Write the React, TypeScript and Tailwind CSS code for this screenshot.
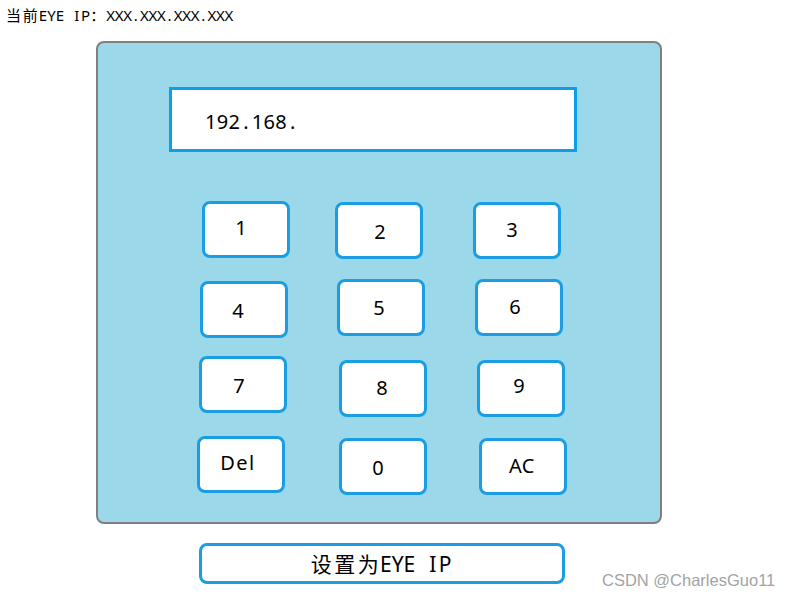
import React from "react";

const latin = "font-['Noto_Sans','Noto_Sans_CJK_SC',sans-serif]";

// Lays text out on a fixed character grid: half-width cells for Latin,
// double cells for CJK, each glyph centred in its cell.
function Mono({ text, cell, wide }: { text: string; cell: string; wide: string }) {
  return (
    <>
      {Array.from(text).map((ch, i) => {
        const isWide = ch.charCodeAt(0) > 0x2e80;
        return (
          <span
            key={i}
            className={`inline-block whitespace-pre text-center ${isWide ? `${wide} font-['Noto_Sans_CJK_SC',sans-serif]` : cell}`}
          >
            {ch}
          </span>
        );
      })}
    </>
  );
}

type Key = {
  label: string;
  box: string; // nudge of the key inside its grid cell
  text: string; // nudge of the label inside the key
};

const keys: Key[] = [
  { label: "1", box: "translate-x-[3px] translate-y-[-1px]", text: "translate-x-[-5px] translate-y-[-2px]" },
  { label: "2", box: "translate-x-[-2px] translate-y-0", text: "translate-x-[1px] translate-y-[1px]" },
  { label: "3", box: "translate-x-[-2px] translate-y-0", text: "translate-x-[-5px] translate-y-[-1px]" },
  { label: "4", box: "translate-x-[1px] translate-y-[1px]", text: "translate-x-[-6px] translate-y-[1px]" },
  { label: "5", box: "translate-x-0 translate-y-[-1px]", text: "translate-x-[-2px] translate-y-0" },
  { label: "6", box: "translate-x-0 translate-y-[-1px]", text: "translate-x-[-4px] translate-y-[-1px]" },
  { label: "7", box: "translate-x-0 translate-y-[-2px]", text: "translate-x-[-4px] translate-y-[1px]" },
  { label: "8", box: "translate-x-[2px] translate-y-[2px]", text: "translate-x-[-1px] translate-y-[-1px]" },
  { label: "9", box: "translate-x-[2px] translate-y-[2px]", text: "translate-x-[-2px] translate-y-[-3px]" },
  { label: "Del", box: "translate-x-[-2px] translate-y-0", text: "translate-x-[-3px] translate-y-[-2px] tracking-[1.5px]" },
  { label: "0", box: "translate-x-[2px] translate-y-[2px]", text: "translate-x-[-5px] translate-y-[1px]" },
  { label: "AC", box: "translate-x-[4px] translate-y-[2px]", text: "translate-x-[-1px] translate-y-[-1px] tracking-[0.5px]" },
];

function KeyButton({ k }: { k: Key }) {
  return (
    <div className={`h-[57px] w-[88px] ${k.box}`}>
      <button
        type="button"
        className={`flex h-full w-full items-center justify-center rounded-[8px] border-[3px] border-[#1b9de4] bg-white text-[20px] leading-none text-black ${latin}`}
      >
        <span className={`block ${k.text}`}>{k.label}</span>
      </button>
    </div>
  );
}

export default function App() {
  return (
    <div className="relative h-[597px] w-[792px] overflow-hidden bg-white">
      {/* current address line */}
      <div className={`h-[41px] pl-[5px] pt-[5px] text-[15px] leading-[20px] text-black ${latin}`}>
        <Mono text="当前EYE IP：XXX.XXX.XXX.XXX" cell="w-[8.45px]" wide="w-[16.9px]" />
      </div>

      {/* keypad panel */}
      <div className="ml-[96px] h-[483px] w-[566px] rounded-[8px] border-2 border-[#7f7f7f] bg-[#9bd9ea]">
        <div
          className={`ml-[71px] mt-[44px] flex h-[65px] w-[408px] items-center border-[3px] border-[#0e9de8] bg-white pl-[33px] pt-[5px] text-[20px] text-black ${latin}`}
        >
          <div>
            <Mono text="192.168." cell="w-[11.7px]" wide="w-[23.4px]" />
          </div>
        </div>

        <div className="ml-[101px] mt-[50px] grid grid-cols-[88px_88px_88px] gap-x-[50px] gap-y-[21px]">
          {keys.map((k) => (
            <KeyButton key={k.label} k={k} />
          ))}
        </div>
      </div>

      {/* apply button */}
      <button
        type="button"
        className={`ml-[199px] mt-[19px] flex h-[41px] w-[366px] items-center justify-center rounded-[8px] border-[3px] border-[#1b9de4] bg-white text-[21px] leading-none text-black ${latin}`}
      >
        <span className="block translate-x-[-2px]">
          <Mono text="设置为EYE IP" cell="w-[11.75px]" wide="w-[23.5px]" />
        </span>
      </button>

      <div className="absolute left-[602px] top-[569px] font-['Liberation_Sans',Arial,sans-serif] text-[16.5px] leading-[22px] text-[#a3a3a3]">
        CSDN @CharlesGuo11
      </div>
    </div>
  );
}
